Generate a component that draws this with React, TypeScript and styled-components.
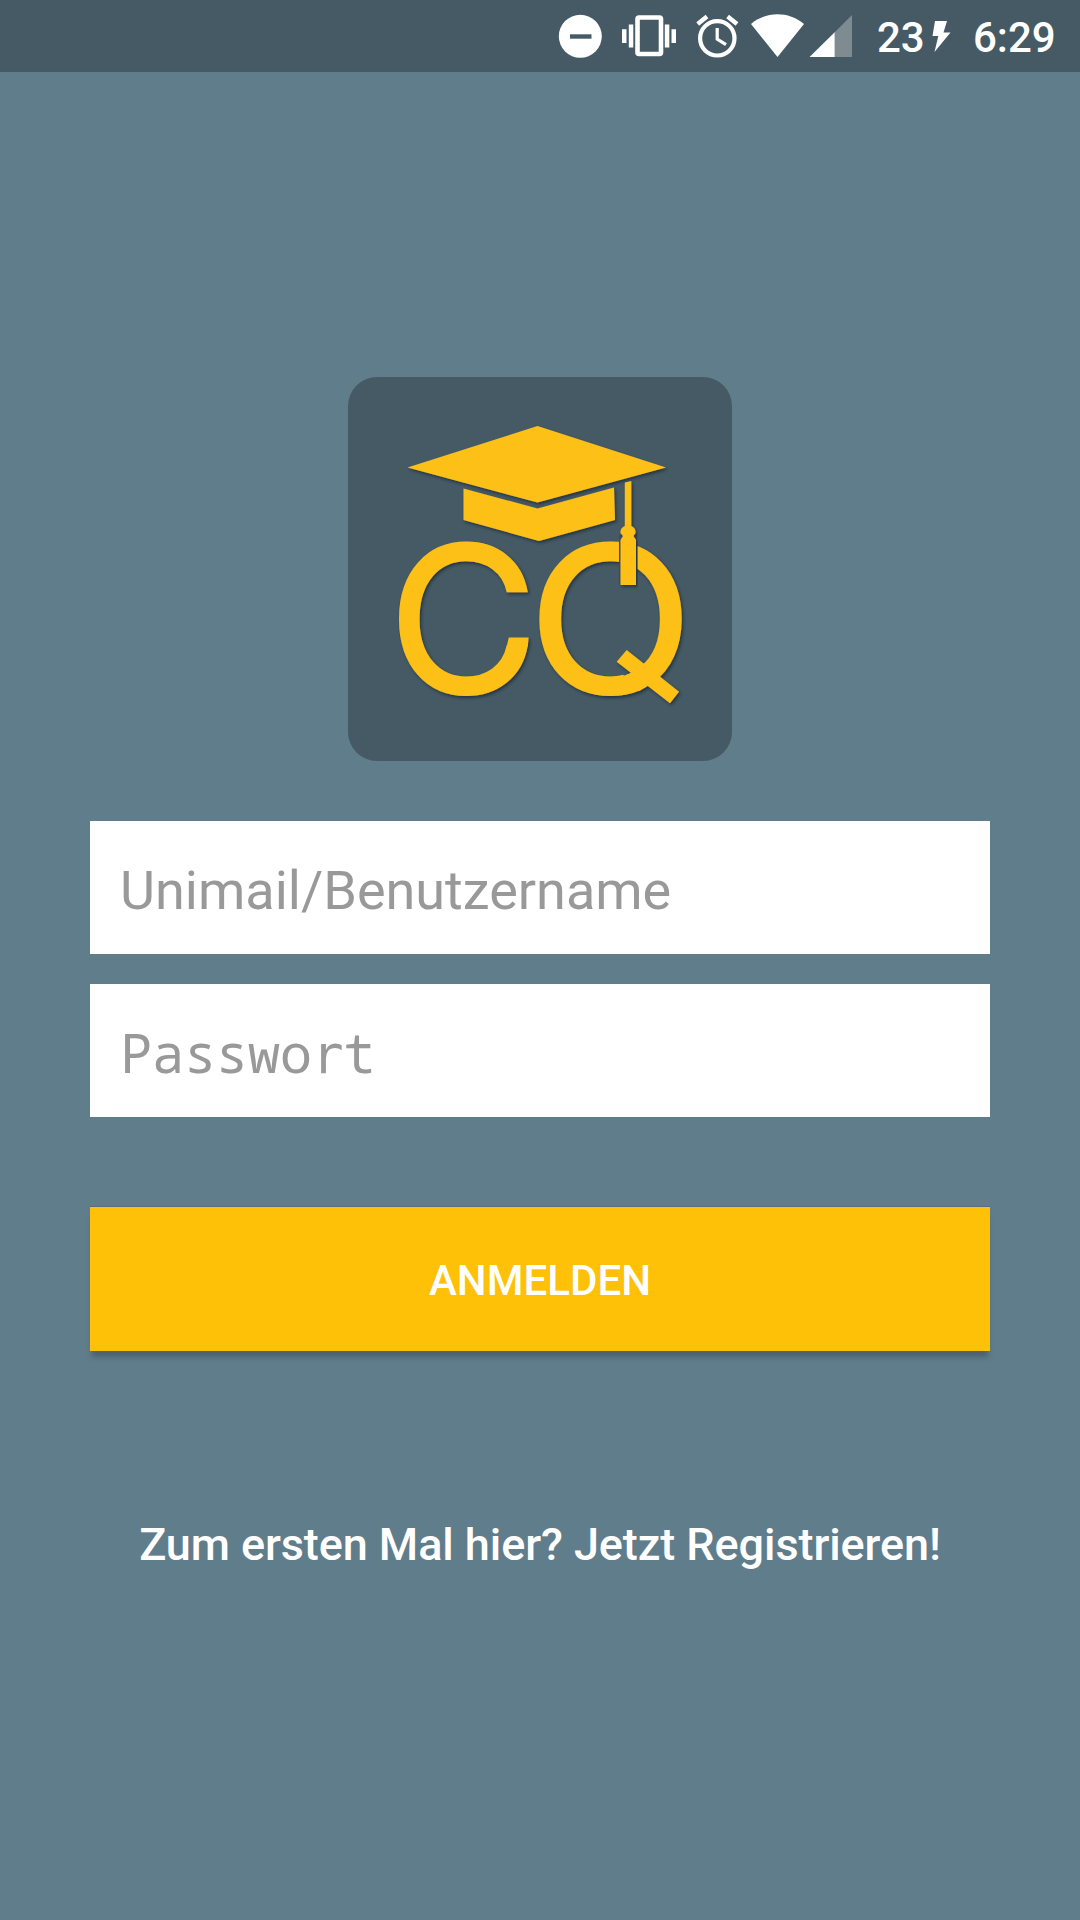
import React from "react";
import styled, { createGlobalStyle } from "styled-components";

const GlobalStyle = createGlobalStyle`
  * { box-sizing: border-box; }
  body { margin: 0; background: #607d8b; }
`;

const Screen = styled.div`
  width: 1080px;
  height: 1920px;
  display: flex;
  flex-direction: column;
  background: #607d8b;
  font-family: Roboto, sans-serif;
  overflow: hidden;
`;

const StatusBar = styled.header`
  height: 72px;
  flex: none;
  display: flex;
  justify-content: flex-end;
  padding-right: 24px;
  background: #455a64;
  color: #fff;
`;

const StatusIcon = styled.svg<{ $gap?: number }>`
  display: block;
  height: 72px;
  flex: none;
  margin-right: ${(p) => p.$gap ?? 0}px;
`;

const StatusText = styled.span<{ $width: number }>`
  width: ${(p) => p.$width}px;
  font-size: 42px;
  font-weight: 500;
  line-height: 76px;
  white-space: nowrap;
`;

const Content = styled.main`
  display: flex;
  flex-direction: column;
  align-items: center;
  padding: 305px 90px 0;
`;

const Logo = styled.svg`
  display: block;
  width: 384px;
  height: 384px;
  margin-bottom: 60px;
  text-rendering: geometricPrecision;
`;

const Form = styled.form`
  width: 100%;
  display: flex;
  flex-direction: column;
  gap: 30px;
`;

const Field = styled.label<{ $mono?: boolean }>`
  height: 133px;
  display: flex;
  align-items: center;
  padding: ${(p) => (p.$mono ? 2 : 7)}px 30px 0;
  background: #fff;
  color: #999;
  font-family: ${(p) => (p.$mono ? '"Noto Sans Mono", "DejaVu Sans Mono", monospace' : "Roboto, sans-serif")};
  font-size: 54px;
  letter-spacing: ${(p) => (p.$mono ? -0.45 : 0)}px;
  line-height: 64px;
`;

const PlainLetter = styled.span`
  font-family: "DejaVu Sans Mono", monospace;
  font-size: 53px;
  line-height: 1;
`;

const SubmitButton = styled.button`
  height: 144px;
  margin-top: 60px;
  padding: 3px 0 0;
  border: 0;
  background: #ffc107;
  box-shadow: 0 8px 5px -2px rgba(60, 72, 88, 0.55), 0 -1px 0 rgba(50, 60, 70, 0.2);
  color: #fff;
  font-family: Roboto, sans-serif;
  font-size: 42px;
  font-weight: 500;
  line-height: 50px;
  letter-spacing: 0.05px;
`;

const RegisterLink = styled.a`
  margin-top: 167px;
  color: #fff;
  font-size: 45px;
  font-weight: 500;
  line-height: 54px;
  letter-spacing: -0.08px;
  white-space: nowrap;
`;

function AppLogo() {
  return (
    <Logo viewBox="0 0 384 384">
      <defs>
        <filter id="shade" x="-10%" y="-10%" width="120%" height="120%">
          <feDropShadow dx="1.5" dy="2" stdDeviation="1.4" floodColor="#1d2c38" floodOpacity="0.75" />
        </filter>
        <clipPath id="bowl">
          <path
            clipRule="evenodd"
            d="M180 150H345V340H180ZM248 265H285L293.500 287.800C288 293 282 296.800 276 298.800ZM288.500 315.200C295 312 301 308.500 305.200 305L308 304L330 333H298Z"
          />
        </clipPath>
      </defs>
      <rect width="384" height="384" rx="29" fill="#455a64" />
      <g fill="#fdc018" filter="url(#shade)" fontFamily="Inter, sans-serif" fontSize="204">
        <text x="39.800" y="316.400" textLength="150" lengthAdjust="spacingAndGlyphs" stroke="#fdc018" strokeWidth="2">C</text>
        <path d="M160.800 260.500H180.600L179.800 269.500H158.700Z" />
        <g clipPath="url(#bowl)">
          <text x="179.400" y="316.400" textLength="166" lengthAdjust="spacingAndGlyphs" stroke="#fdc018" strokeWidth="2">Q</text>
        </g>
        <path d="M331 314.700L322 326.300L268.700 284.700L278.700 273Z" />
        <path d="M59.500 90.500L189.500 49L318 90.500L189.500 125.500Z" />
        <path d="M115.500 111.500L189.500 131.500L266 110.500L267 143L191 164L115.500 143Z" />
      </g>
      <path d="M271 158H289.300V208H271Z" fill="#3d5059" />
      <g fill="#fdc018" filter="url(#shade)">
        <path d="M276.800 105.500L283.300 104V149C286 150 288 153 287.500 156L285.500 159L288 163V208H272.500V163L275 159L272.500 156C272 153 274 150 276.800 149Z" />
      </g>
    </Logo>
  );
}

export default function App() {
  return (
    <>
      <GlobalStyle />
      <Screen>
        <StatusBar>
          <StatusIcon width="44" viewBox="558 0 44 72" $gap={19}>
            <circle cx="580.300" cy="36.300" r="21.500" fill="#fff" />
            <path d="M570 34.300h21.500v4.400H570z" fill="#455a64" />
          </StatusIcon>
          <StatusIcon width="56" viewBox="621 0 56 72" $gap={19}>
            <rect x="637.500" y="17.500" width="23.500" height="36.500" rx="1.500" fill="none" stroke="#fff" strokeWidth="4.600" />
            <path d="M622 29.300h4.500v13.700H622zM628.800 24.500h4.500v23h-4.500zM664.800 24.500h4.500v23h-4.500zM671.500 29.300h4.500v13.700h-4.500z" fill="#fff" />
          </StatusIcon>
          <StatusIcon width="44" viewBox="696 0 44 72" $gap={10}>
            <circle cx="717.300" cy="38.300" r="17.200" fill="none" stroke="#fff" strokeWidth="4.200" />
            <path d="M717.200 28v11.200l8.800 5.500" fill="none" stroke="#fff" strokeWidth="3.200" />
            <path d="M697.700 24L707 16.500M727.600 16.500L737 24" stroke="#fff" strokeWidth="4.400" />
          </StatusIcon>
          <StatusIcon width="56" viewBox="750 0 56 72" $gap={3}>
            <path d="M751 24C766.500 11 788.500 11 804 24L777.500 57Z" fill="#fff" />
          </StatusIcon>
          <StatusIcon width="44" viewBox="809 0 44 72" $gap={24}>
            <path d="M852 15V57H834.500V32.500Z" fill="#7e8c92" />
            <path d="M834.700 32.200V57H809.500Z" fill="#fff" />
          </StatusIcon>
          <StatusText $width={54}>23</StatusText>
          <StatusIcon width="22" viewBox="931 0 22 72" $gap={20}>
            <path d="M935 21H947L943.500 32.500H950.500L934.500 52L938.300 36H932.500Z" fill="#fff" />
          </StatusIcon>
          <StatusText $width={83}>6:29</StatusText>
        </StatusBar>
        <Content>
          <AppLogo />
          <Form>
            <Field>Unimail/Benutzername</Field>
            <Field $mono>
              <span>Passwo<PlainLetter>r</PlainLetter>t</span>
            </Field>
            <SubmitButton type="button">ANMELDEN</SubmitButton>
          </Form>
          <RegisterLink>Zum ersten Mal hier? Jetzt Registrieren!</RegisterLink>
        </Content>
      </Screen>
    </>
  );
}
